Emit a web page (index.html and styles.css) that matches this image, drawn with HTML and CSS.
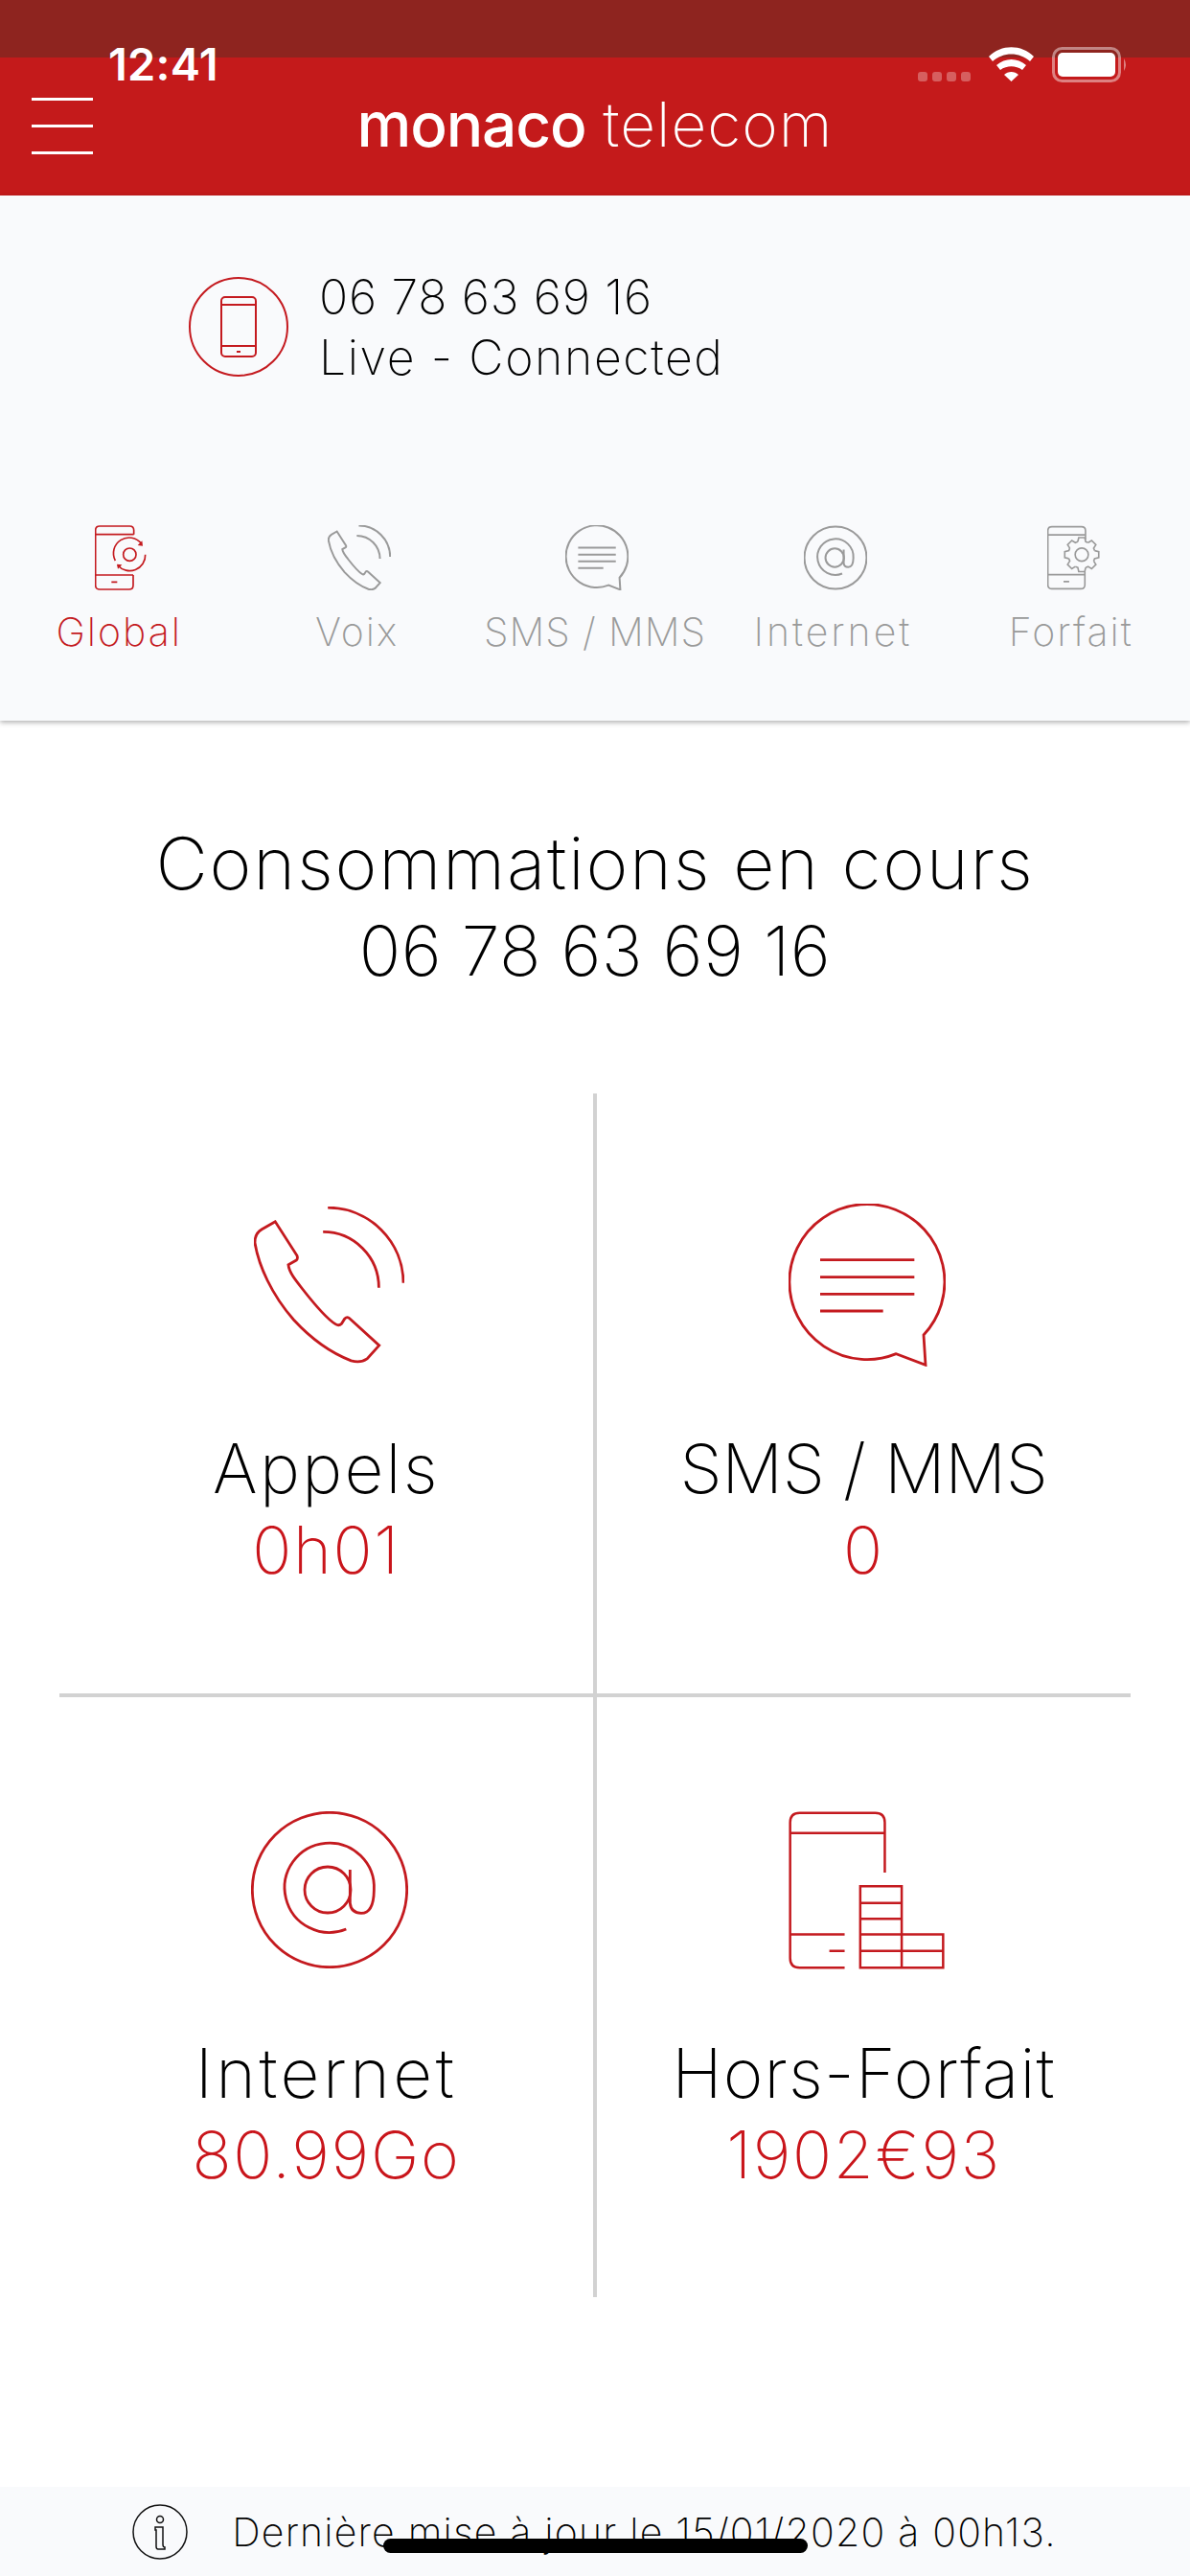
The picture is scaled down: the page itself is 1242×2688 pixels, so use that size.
FILE: index.html
```html
<!DOCTYPE html>
<html lang="fr">
<head>
<meta charset="utf-8">
<title>monaco telecom</title>
<link rel="stylesheet" href="styles.css">
</head>
<body>
<svg class="defs" width="0" height="0" aria-hidden="true">
  <symbol id="i-phone" viewBox="135 115 472 492">
    <path d="M202 162 L160 186 Q138 198 138 228 C150 300 190 390 260 470 C320 535 380 575 440 598 Q470 606 490 592 L528 550 L436 466 Q428 458 420 466 L410 482 Q402 490 392 484 C360 465 320 415 285 370 C265 345 245 320 243 297 L268 283 Q274 278 270 268 Z"/>
    <path d="M352 194 A175 175 0 0 1 527 369"/>
    <path d="M367 118 A237 237 0 0 1 604 354"/>
  </symbol>
  <symbol id="i-chat" viewBox="95 105 492 510">
    <path d="M432 575 A243 243 0 1 1 518 516 L524 610 Z"/>
    <path d="M194 281 H489 M194 335 H489 M194 388 H489 M194 441 H391"/>
  </symbol>
  <symbol id="i-at" viewBox="65 57 492 492">
    <circle cx="311" cy="303" r="242"/>
    <circle cx="305" cy="303" r="72"/>
    <path d="M375 240 V345 Q378 375 410 376 Q449 376 450 305 A140 140 0 1 0 363 426"/>
  </symbol>
</svg>

<header class="top">
  <div class="top-band"></div>
  <div class="top-bar">
    <div class="burger"><span></span><span></span><span></span></div>
    <div class="logo"><span class="logo-strong">monaco</span> <span class="logo-thin">telecom</span></div>
  </div>
</header>

<div class="status">
  <span class="time">12:41</span>
  <svg class="status-icons" viewBox="958 49 219 37" width="219" height="37">
    <g class="dots">
      <rect x="958" y="75" width="10" height="10" rx="3"/>
      <rect x="973" y="75" width="10" height="10" rx="3"/>
      <rect x="988" y="75" width="10" height="10" rx="3"/>
      <rect x="1003" y="75" width="10" height="10" rx="3"/>
    </g>
    <path class="wifi" d="M1032 59 C1045 46 1066 46 1079 59 L1075 64 C1064 54 1047 54 1036 64 Z M1040 68 C1049 60 1062 60 1071 68 L1067 73 C1060 68 1051 68 1044 73 Z M1048 78 C1052 74 1059 74 1063 78 L1055.500 85 Z"/>
    <rect class="bat-frame" x="1099.500" y="50.500" width="69" height="34" rx="9"/>
    <rect class="bat-fill" x="1104" y="55" width="60" height="25" rx="5"/>
    <path class="bat-nub" d="M1173 61 Q1177 67.500 1173 74 Z"/>
  </svg>
</div>

<section class="account">
  <div class="line">
    <span class="line-badge">
      <svg class="line-phone" viewBox="0 0 38 64" width="38" height="64">
        <rect x="1" y="1" width="36" height="62" rx="4"/>
        <path d="M1 9 H37 M1 52 H37 M17 58 H21"/>
      </svg>
    </span>
    <div class="line-text">
      <div class="line-number">06 78 63 69 16</div>
      <div class="line-state">Live - Connected</div>
    </div>
  </div>
  <nav class="tabs">
    <a class="tab tab-active">
      <svg class="tab-icon tab-icon-phone" viewBox="118 55 165 202" width="55" height="68">
        <path d="M240 83 V70 Q240 57 227 57 H133 Q120 57 120 70 V242 Q120 255 133 255 H225 Q238 255 238 242 V210"/>
        <path d="M120 83 H240 M120 210 H238 M170 232 H188"/>
        <circle cx="227" cy="146" r="20"/>
        <path d="M264 112 A49 49 0 0 0 182 165"/>
        <path d="M190 180 A49 49 0 0 0 276 146"/>
        <path class="solid" d="M268 119 L252 117 L266 103 Z M187 176 L203 178 L190 191 Z"/>
      </svg>
      <span>Global</span>
    </a>
    <a class="tab">
      <svg class="tab-icon"><use href="#i-phone"/></svg>
      <span>Voix</span>
    </a>
    <a class="tab">
      <svg class="tab-icon"><use href="#i-chat"/></svg>
      <span class="tab-tight">SMS / MMS</span>
    </a>
    <a class="tab">
      <svg class="tab-icon"><use href="#i-at"/></svg>
      <span class="tab-wide">Internet</span>
    </a>
    <a class="tab">
      <svg class="tab-icon tab-icon-phone" viewBox="155 55 168 202" width="55" height="68">
        <path d="M277 98 V70 Q277 57 264 57 H170 Q157 57 157 70 V242 Q157 255 170 255 H262 Q275 255 275 242 V200"/>
        <path d="M157 83 H277 M157 210 H275 M207 232 H225"/>
        <circle cx="265" cy="146" r="21"/>
        <g class="gear" transform="translate(265 146)">
          <path d="M41.100 -12.600 L54.200 -9.600 V9.600 L41.100 12.600 Q40 16 38 20.200"/>
          <path transform="rotate(45)" d="M41.100 -12.600 L54.200 -9.600 V9.600 L41.100 12.600 Q40 16 38 20.200"/>
          <path transform="rotate(90)" d="M41.100 -12.600 L54.200 -9.600 V9.600 L41.100 12.600 Q40 16 38 20.200"/>
          <path transform="rotate(135)" d="M41.100 -12.600 L54.200 -9.600 V9.600 L41.100 12.600 Q40 16 38 20.200"/>
          <path transform="rotate(180)" d="M41.100 -12.600 L54.200 -9.600 V9.600 L41.100 12.600 Q40 16 38 20.200"/>
          <path transform="rotate(225)" d="M41.100 -12.600 L54.200 -9.600 V9.600 L41.100 12.600 Q40 16 38 20.200"/>
          <path transform="rotate(270)" d="M41.100 -12.600 L54.200 -9.600 V9.600 L41.100 12.600 Q40 16 38 20.200"/>
          <path transform="rotate(315)" d="M41.100 -12.600 L54.200 -9.600 V9.600 L41.100 12.600 Q40 16 38 20.200"/>
        </g>
      </svg>
      <span>Forfait</span>
    </a>
  </nav>
</section>

<main class="main">
  <h1 class="title"><span class="title-main">Consommations en cours</span><br>06 78 63 69 16</h1>
  <div class="grid">
    <div class="cell cell-tl">
      <div class="cell-icon"><svg class="big-icon big-phone"><use href="#i-phone"/></svg></div>
      <div class="cell-label">Appels</div>
      <div class="cell-value">0h01</div>
    </div>
    <div class="cell cell-tr">
      <div class="cell-icon"><svg class="big-icon big-chat"><use href="#i-chat"/></svg></div>
      <div class="cell-label cell-label-tight">SMS / MMS</div>
      <div class="cell-value">0</div>
    </div>
    <div class="cell cell-bl">
      <div class="cell-icon"><svg class="big-icon big-at"><use href="#i-at"/></svg></div>
      <div class="cell-label cell-label-wide">Internet</div>
      <div class="cell-value">80.99Go</div>
    </div>
    <div class="cell cell-br">
      <div class="cell-icon">
        <svg class="big-icon big-stack" viewBox="70 55 490 495">
          <path d="M246 545 H105 Q75 545 75 515 V90 Q75 60 105 60 H342 Q372 60 372 90 V247"/>
          <path d="M75 123 H372 M75 441 H246 M198 493 H246"/>
          <path d="M295 290 H425 V545 H295 Z M425 441 H555 V545 H425 Z M295 342 H425 M295 392 H425 M295 441 H425 M295 493 H555"/>
        </svg>
      </div>
      <div class="cell-label cell-label-mid">Hors-Forfait</div>
      <div class="cell-value">1902€93</div>
    </div>
  </div>
</main>

<footer class="foot">
  <svg class="foot-icon" viewBox="0 0 58 58" width="58" height="58">
    <circle cx="29" cy="29" r="28"/>
    <circle cx="29" cy="16" r="3.500"/>
    <path d="M24 24 H32 V42 Q32 45 34 45 V47 H27 Q25 47 25 44 V27 H24 Z"/>
  </svg>
  <span class="foot-text">Dernière mise à jour le 15/01/2020 à 00h13.</span>
</footer>
<div class="home"></div>
</body>
</html>
```
FILE: styles.css
```css
* { box-sizing: border-box; }
html, body { margin: 0; padding: 0; }
body {
  width: 1242px;
  height: 2688px;
  position: relative;
  overflow: hidden;
  display: flex;
  flex-direction: column;
  background: #fff;
  color: #000;
  font-family: Inter, "Noto Sans", sans-serif;
  font-weight: 250;
}
.defs { position: absolute; }
symbol path, symbol circle { fill: none; stroke: currentColor; vector-effect: non-scaling-stroke; }

.top { flex: none; }
.top-band { height: 60px; background: #8e241f; }
.top-bar {
  height: 144px;
  background: #c41a1b;
  display: grid;
  grid-template-columns: 1fr auto 1fr;
  align-items: start;
}
.burger { display: flex; flex-direction: column; gap: 25px; padding: 42px 0 0 33px; }
.burger span { display: block; width: 64px; height: 3px; background: #fff; }
.logo { color: #fff; font-size: 64px; line-height: 70px; padding-top: 35px; white-space: nowrap; }
.logo-strong { font-weight: 450; letter-spacing: -1.2px; }
.logo-thin { font-weight: 200; letter-spacing: 1px; }

.status {
  position: absolute;
  top: 0; left: 0; right: 0;
  display: flex;
  justify-content: space-between;
  padding: 41px 65px 0 113px;
}
.time { color: #fff; font-family: Inter, sans-serif; font-weight: 600; font-size: 47px; line-height: 52px; letter-spacing: .2px; }
.status-icons { margin-top: 8px; }
.dots rect { fill: rgba(255,255,255,.3); }
.wifi { fill: #fff; }
.bat-frame { fill: none; stroke: rgba(255,255,255,.45); stroke-width: 3px; }
.bat-fill { fill: #fff; }
.bat-nub { fill: rgba(255,255,255,.45); }

.account {
  flex: none;
  height: 548px;
  padding-top: 85px;
  background: #f9fafc;
  box-shadow: 0 2px 5px rgba(0,0,0,.3);
  position: relative;
}
.line { display: flex; align-items: center; gap: 32px; padding-left: 197px; height: 104px; }
.line-badge {
  width: 104px; height: 104px;
  border: 2px solid #c41a1f;
  border-radius: 50%;
  display: flex; align-items: center; justify-content: center;
}
.line-phone { fill: none; stroke: #c41a1f; stroke-width: 2px; }
.line-text { font-size: 50px; line-height: 63px; padding-top: 2px; }
.line-number { letter-spacing: .7px; }
.line-state { letter-spacing: 1.6px; }

.tabs { display: grid; grid-template-columns: repeat(5, 1fr); margin-top: 155px; }
.tab {
  display: flex; flex-direction: column; align-items: center;
  color: #9a9a9a;
  font-size: 41px;
  line-height: 50px;
  letter-spacing: 2px;
  gap: 18px;
}
.tab-tight { letter-spacing: .9px; }
.tab-wide { letter-spacing: 3px; }
.tab-active { color: #c41a1f; }
.tab-icon { width: 66px; height: 68px; stroke-width: 2px; margin-left: 5px; }
.tab-icon-phone { width: 55px; fill: none; stroke: currentColor; stroke-width: 5px; }
.tab-icon-phone .solid { fill: currentColor; stroke: none; }

.main { flex: 1; min-height: 0; }
.title { margin: 0; padding-top: 104px; font-size: 72px; line-height: 90px; font-weight: 250; text-align: center; letter-spacing: .4px; }
.title-main { font-size: 75px; letter-spacing: 1.7px; }
.grid {
  margin: 104px 62px 0;
  height: 1256px;
  display: grid;
  grid-template-columns: 1fr 1fr;
  grid-template-rows: 628px 628px;
}
.cell { padding-top: 115px; text-align: center; }
.cell-bl, .cell-br { padding-top: 116px; }
.cell-tl, .cell-bl { border-right: 2px solid #d2d2d2; }
.cell-tr, .cell-br { border-left: 2px solid #d2d2d2; }
.cell-tl, .cell-tr { border-bottom: 2px solid #d2d2d2; }
.cell-bl, .cell-br { border-top: 2px solid #d2d2d2; }
.cell-icon { height: 170px; display: flex; justify-content: center; align-items: center; margin-bottom: 64px; padding-left: 6px; color: #c41a1f; }
.big-icon { stroke-width: 2.800px; }
.big-phone { width: 157px; height: 164px; }
.big-chat { width: 164px; height: 170px; }
.big-at { width: 164px; height: 164px; }
.big-stack { width: 163px; height: 165px; fill: none; stroke: currentColor; stroke-width: 7.500px; }
.cell-label { font-size: 71px; line-height: 85px; letter-spacing: 2.300px; }
.cell-label-tight { letter-spacing: -.4px; }
.cell-label-wide { letter-spacing: 3.500px; }
.cell-label-mid { letter-spacing: 1.200px; }
.cell-value { font-size: 68px; line-height: 85px; letter-spacing: 1.700px; color: #c9151b; }

.foot {
  flex: none;
  height: 93px;
  background: #f9fafc;
  display: flex;
  align-items: center;
  justify-content: center;
  gap: 46px;
  padding-right: 1px;
}
.foot-icon { fill: none; stroke: #111; stroke-width: 1.500px; }
.foot-text { font-size: 41px; line-height: 50px; letter-spacing: 1.200px; }
.home {
  position: absolute;
  left: 400px; top: 2649px;
  width: 443px; height: 15px;
  background: #000;
  border-radius: 8px;
}
```
